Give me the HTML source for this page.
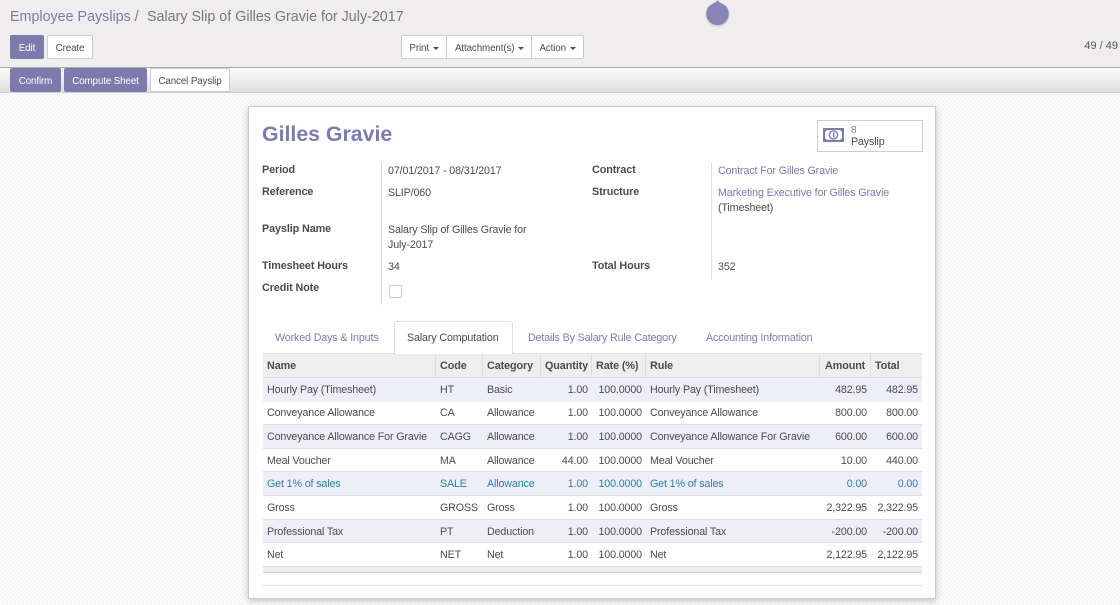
<!DOCTYPE html>
<html><head><meta charset="utf-8"><style>
*{box-sizing:border-box}
html,body{margin:0;padding:0}
body{width:1120px;height:605px;overflow:hidden;position:relative;font-family:"Liberation Sans",sans-serif;font-size:10.7px;letter-spacing:-.13px;color:#4c4c4c;
background-color:#f8f8f8;background-image:repeating-conic-gradient(#f5f5f5 0 25%,#fbfbfb 0 50%);background-size:4px 4px}
.a{position:absolute;white-space:nowrap}
.top{position:absolute;left:0;top:0;width:1120px;height:67px;background:#efedee}
.line{position:absolute;left:0;top:67px;width:1120px;height:1px;background:#acacac}
.sb{position:absolute;left:0;top:68px;width:1120px;height:25px;background:linear-gradient(#fcfcfc,#dedede);border-bottom:1px solid #cfcfcf}
.btn{position:absolute;height:24px;line-height:25px;text-align:center;border:1px solid #ccc;background:#fff;border-radius:2px;color:#4c4c4c;font-size:9.8px;letter-spacing:-.12px}
.p{background:#7c7bad;border-color:#7c7bad;color:#fff}
.caret{display:inline-block;width:0;height:0;border-left:3px solid transparent;border-right:3px solid transparent;border-top:3px solid #4c4c4c;vertical-align:middle;margin-left:1px}
.sheet{position:absolute;left:248px;top:106px;width:688px;height:493px;background:#fff;border:1px solid #c9c8d8;border-bottom-color:#ccc;box-shadow:0 2px 6px rgba(0,0,0,.22)}
.l{font-weight:bold;color:#4c4c4c;font-size:10.8px;letter-spacing:-.1px}
.lnk{color:#7c7bad}
.r{text-align:right}
.h{position:absolute;left:263px;top:353px;width:659px;height:25px;background:#eee;border-top:1px solid #ddd;border-bottom:1px solid #ddd}
.vs{position:absolute;top:354px;width:1px;height:23px;background:#ddd}
.row{position:absolute;left:263px;width:659px;border-bottom:1px solid #ddd}
.odd{background:#eeeef7}
.t{position:absolute;white-space:nowrap;line-height:12px;margin-top:1px}
</style></head><body>
<div class="top"></div><div class="line"></div><div class="sb"></div>
<div class="a" style="left:10px;top:8px;font-size:14.3px;letter-spacing:0;line-height:18px;color:#7c7bad">Employee Payslips <span style="color:#777">/</span></div>
<div class="a" style="left:147px;top:8px;font-size:14.3px;letter-spacing:0;line-height:18px;color:#777">Salary Slip of Gilles Gravie for July-2017</div>
<svg class="a" style="left:704px;top:0" width="28" height="30" viewBox="0 0 28 30"><path d="M13.500 0C12.500 2.500 9 3.200 6 5.500C3.500 7.500 2.200 10.500 2.200 13.800A11.300 11.300 0 0 0 24.800 13.800C24.800 10.500 23.500 7.500 21 5.500C18 3.200 14.500 2.500 13.500 0Z" fill="#8786b5" style="filter:drop-shadow(0 1px 1px rgba(0,0,0,.2))"/></svg>
<div class="btn p" style="left:10px;top:35px;width:34px">Edit</div>
<div class="btn" style="left:47px;top:35px;width:46px">Create</div>
<div class="btn" style="left:401px;top:35px;width:46px;border-radius:2px 0 0 2px">Print <i class="caret"></i></div>
<div class="btn" style="left:446px;top:35px;width:87px;border-radius:0">Attachment(s) <i class="caret"></i></div>
<div class="btn" style="left:531px;top:35px;width:53px;border-radius:0 2px 2px 0">Action <i class="caret"></i></div>
<div class="a" style="right:2px;top:40px;font-size:11px;letter-spacing:0;line-height:12px;color:#555">49 / 49</div>
<div class="btn p" style="left:10px;top:68px;width:51px">Confirm</div>
<div class="btn p" style="left:64px;top:68px;width:83px">Compute Sheet</div>
<div class="btn" style="left:150px;top:68px;width:80px">Cancel Payslip</div>

<div class="sheet"></div>
<div class="a" style="left:262px;top:121px;font-size:21.3px;letter-spacing:0;line-height:26px;font-weight:bold;color:#7c7bad">Gilles Gravie</div>
<div class="a" style="left:817px;top:120px;width:106px;height:32px;border:1px solid #ccc"></div>
<svg class="a" style="left:823px;top:128px" width="21" height="14" viewBox="0 0 21 14"><rect x="0" y="0" width="21" height="14" fill="#7c7bad"/><path d="M4 2H17L19 4V10L17 12H4L2 10V4Z" fill="#fff"/><circle cx="10.500" cy="7" r="4.800" fill="#7c7bad"/><circle cx="10.500" cy="7" r="3.400" fill="#fff"/><rect x="10" y="4.500" width="1.500" height="5" fill="#7c7bad"/></svg>
<div class="a lnk" style="left:851px;top:125px;font-size:10px;letter-spacing:0;line-height:12px">8</div>
<div class="a" style="left:851px;top:136px;line-height:13px;color:#4c4c4c">Payslip</div>

<div class="a" style="left:381px;top:162px;width:1px;height:143px;background:#ddd"></div>
<div class="a" style="left:711px;top:162px;width:1px;height:118px;background:#ddd"></div>
<div class="t l" style="left:262px;top:163px">Period</div>
<div class="t l" style="left:262px;top:185px">Reference</div>
<div class="t l" style="left:262px;top:222px">Payslip Name</div>
<div class="t l" style="left:262px;top:259px">Timesheet Hours</div>
<div class="t l" style="left:262px;top:281px">Credit Note</div>
<div class="t" style="left:388px;top:164px">07/01/2017 - 08/31/2017</div>
<div class="t" style="left:388px;top:186px">SLIP/060</div>
<div class="t" style="left:388px;top:223px">Salary Slip of Gilles Gravie for</div>
<div class="t" style="left:388px;top:238px">July-2017</div>
<div class="t" style="left:388px;top:260px">34</div>
<div class="a" style="left:389px;top:285px;width:13px;height:13px;border:1px solid #ccc;border-radius:2px;background:#fff"></div>
<div class="t l" style="left:592px;top:163px">Contract</div>
<div class="t l" style="left:592px;top:185px">Structure</div>
<div class="t l" style="left:592px;top:259px">Total Hours</div>
<div class="t lnk" style="left:718px;top:164px">Contract For Gilles Gravie</div>
<div class="t lnk" style="left:718px;top:186px">Marketing Executive for Gilles Gravie</div>
<div class="t" style="left:718px;top:201px">(Timesheet)</div>
<div class="t" style="left:718px;top:260px">352</div>

<div class="a" style="left:394px;top:321px;width:119px;height:33px;background:#fff;border:1px solid #ddd;border-bottom:0;border-radius:3px 3px 0 0;z-index:2"></div>
<div class="t lnk" style="left:275px;top:331px">Worked Days &amp; Inputs</div>
<div class="t" style="left:407px;top:331px;z-index:3">Salary Computation</div>
<div class="t lnk" style="left:528px;top:331px">Details By Salary Rule Category</div>
<div class="t lnk" style="left:706px;top:331px">Accounting Information</div>

<div class="h"></div>
<div class="vs" style="left:435px"></div><div class="vs" style="left:482px"></div><div class="vs" style="left:540px"></div><div class="vs" style="left:591px"></div><div class="vs" style="left:645px"></div><div class="vs" style="left:819px"></div><div class="vs" style="left:870px"></div>
<div class="t l" style="left:267px;top:359px">Name</div>
<div class="t l" style="left:440px;top:359px">Code</div>
<div class="t l" style="left:487px;top:359px">Category</div>
<div class="t l" style="left:545px;top:359px">Quantity</div>
<div class="t l" style="left:596px;top:359px">Rate (%)</div>
<div class="t l" style="left:650px;top:359px">Rule</div>
<div class="t l" style="left:825px;top:359px">Amount</div>
<div class="t l" style="left:875px;top:359px">Total</div>

<div class="row odd" style="top:378px;height:24px;border-bottom:0"></div>
<div class="row" style="top:402px;height:23px"></div>
<div class="row odd" style="top:425px;height:24px"></div>
<div class="row" style="top:449px;height:23px"></div>
<div class="row odd" style="top:472px;height:24px"></div>
<div class="row" style="top:496px;height:24px"></div>
<div class="row odd" style="top:520px;height:23px"></div>
<div class="row" style="top:543px;height:24px"></div>
<div class="row" style="top:567px;height:6px;background:#eee;border-bottom:1px solid #ccc"></div>
<div class="a" style="left:263px;top:585px;width:659px;height:1px;background:#ddd"></div>

<div class="t" style="left:267px;top:383px">Hourly Pay (Timesheet)</div><div class="t" style="left:440px;top:383px">HT</div><div class="t" style="left:487px;top:383px">Basic</div><div class="t r" style="right:532px;top:383px">1.00</div><div class="t r" style="right:478px;top:383px">100.0000</div><div class="t" style="left:650px;top:383px">Hourly Pay (Timesheet)</div><div class="t r" style="right:253px;top:383px">482.95</div><div class="t r" style="right:202px;top:383px">482.95</div>
<div class="t" style="left:267px;top:406px">Conveyance Allowance</div><div class="t" style="left:440px;top:406px">CA</div><div class="t" style="left:487px;top:406px">Allowance</div><div class="t r" style="right:532px;top:406px">1.00</div><div class="t r" style="right:478px;top:406px">100.0000</div><div class="t" style="left:650px;top:406px">Conveyance Allowance</div><div class="t r" style="right:253px;top:406px">800.00</div><div class="t r" style="right:202px;top:406px">800.00</div>
<div class="t" style="left:267px;top:430px">Conveyance Allowance For Gravie</div><div class="t" style="left:440px;top:430px">CAGG</div><div class="t" style="left:487px;top:430px">Allowance</div><div class="t r" style="right:532px;top:430px">1.00</div><div class="t r" style="right:478px;top:430px">100.0000</div><div class="t" style="left:650px;top:430px">Conveyance Allowance For Gravie</div><div class="t r" style="right:253px;top:430px">600.00</div><div class="t r" style="right:202px;top:430px">600.00</div>
<div class="t" style="left:267px;top:454px">Meal Voucher</div><div class="t" style="left:440px;top:454px">MA</div><div class="t" style="left:487px;top:454px">Allowance</div><div class="t r" style="right:532px;top:454px">44.00</div><div class="t r" style="right:478px;top:454px">100.0000</div><div class="t" style="left:650px;top:454px">Meal Voucher</div><div class="t r" style="right:253px;top:454px">10.00</div><div class="t r" style="right:202px;top:454px">440.00</div>
<div style="color:#2f7db0"><div class="t" style="left:267px;top:477px">Get 1% of sales</div><div class="t" style="left:440px;top:477px">SALE</div><div class="t" style="left:487px;top:477px">Allowance</div><div class="t r" style="right:532px;top:477px">1.00</div><div class="t r" style="right:478px;top:477px">100.0000</div><div class="t" style="left:650px;top:477px">Get 1% of sales</div><div class="t r" style="right:253px;top:477px">0.00</div><div class="t r" style="right:202px;top:477px">0.00</div></div>
<div class="t" style="left:267px;top:501px">Gross</div><div class="t" style="left:440px;top:501px">GROSS</div><div class="t" style="left:487px;top:501px">Gross</div><div class="t r" style="right:532px;top:501px">1.00</div><div class="t r" style="right:478px;top:501px">100.0000</div><div class="t" style="left:650px;top:501px">Gross</div><div class="t r" style="right:253px;top:501px">2,322.95</div><div class="t r" style="right:202px;top:501px">2,322.95</div>
<div class="t" style="left:267px;top:525px">Professional Tax</div><div class="t" style="left:440px;top:525px">PT</div><div class="t" style="left:487px;top:525px">Deduction</div><div class="t r" style="right:532px;top:525px">1.00</div><div class="t r" style="right:478px;top:525px">100.0000</div><div class="t" style="left:650px;top:525px">Professional Tax</div><div class="t r" style="right:253px;top:525px">-200.00</div><div class="t r" style="right:202px;top:525px">-200.00</div>
<div class="t" style="left:267px;top:548px">Net</div><div class="t" style="left:440px;top:548px">NET</div><div class="t" style="left:487px;top:548px">Net</div><div class="t r" style="right:532px;top:548px">1.00</div><div class="t r" style="right:478px;top:548px">100.0000</div><div class="t" style="left:650px;top:548px">Net</div><div class="t r" style="right:253px;top:548px">2,122.95</div><div class="t r" style="right:202px;top:548px">2,122.95</div>
</body></html>
